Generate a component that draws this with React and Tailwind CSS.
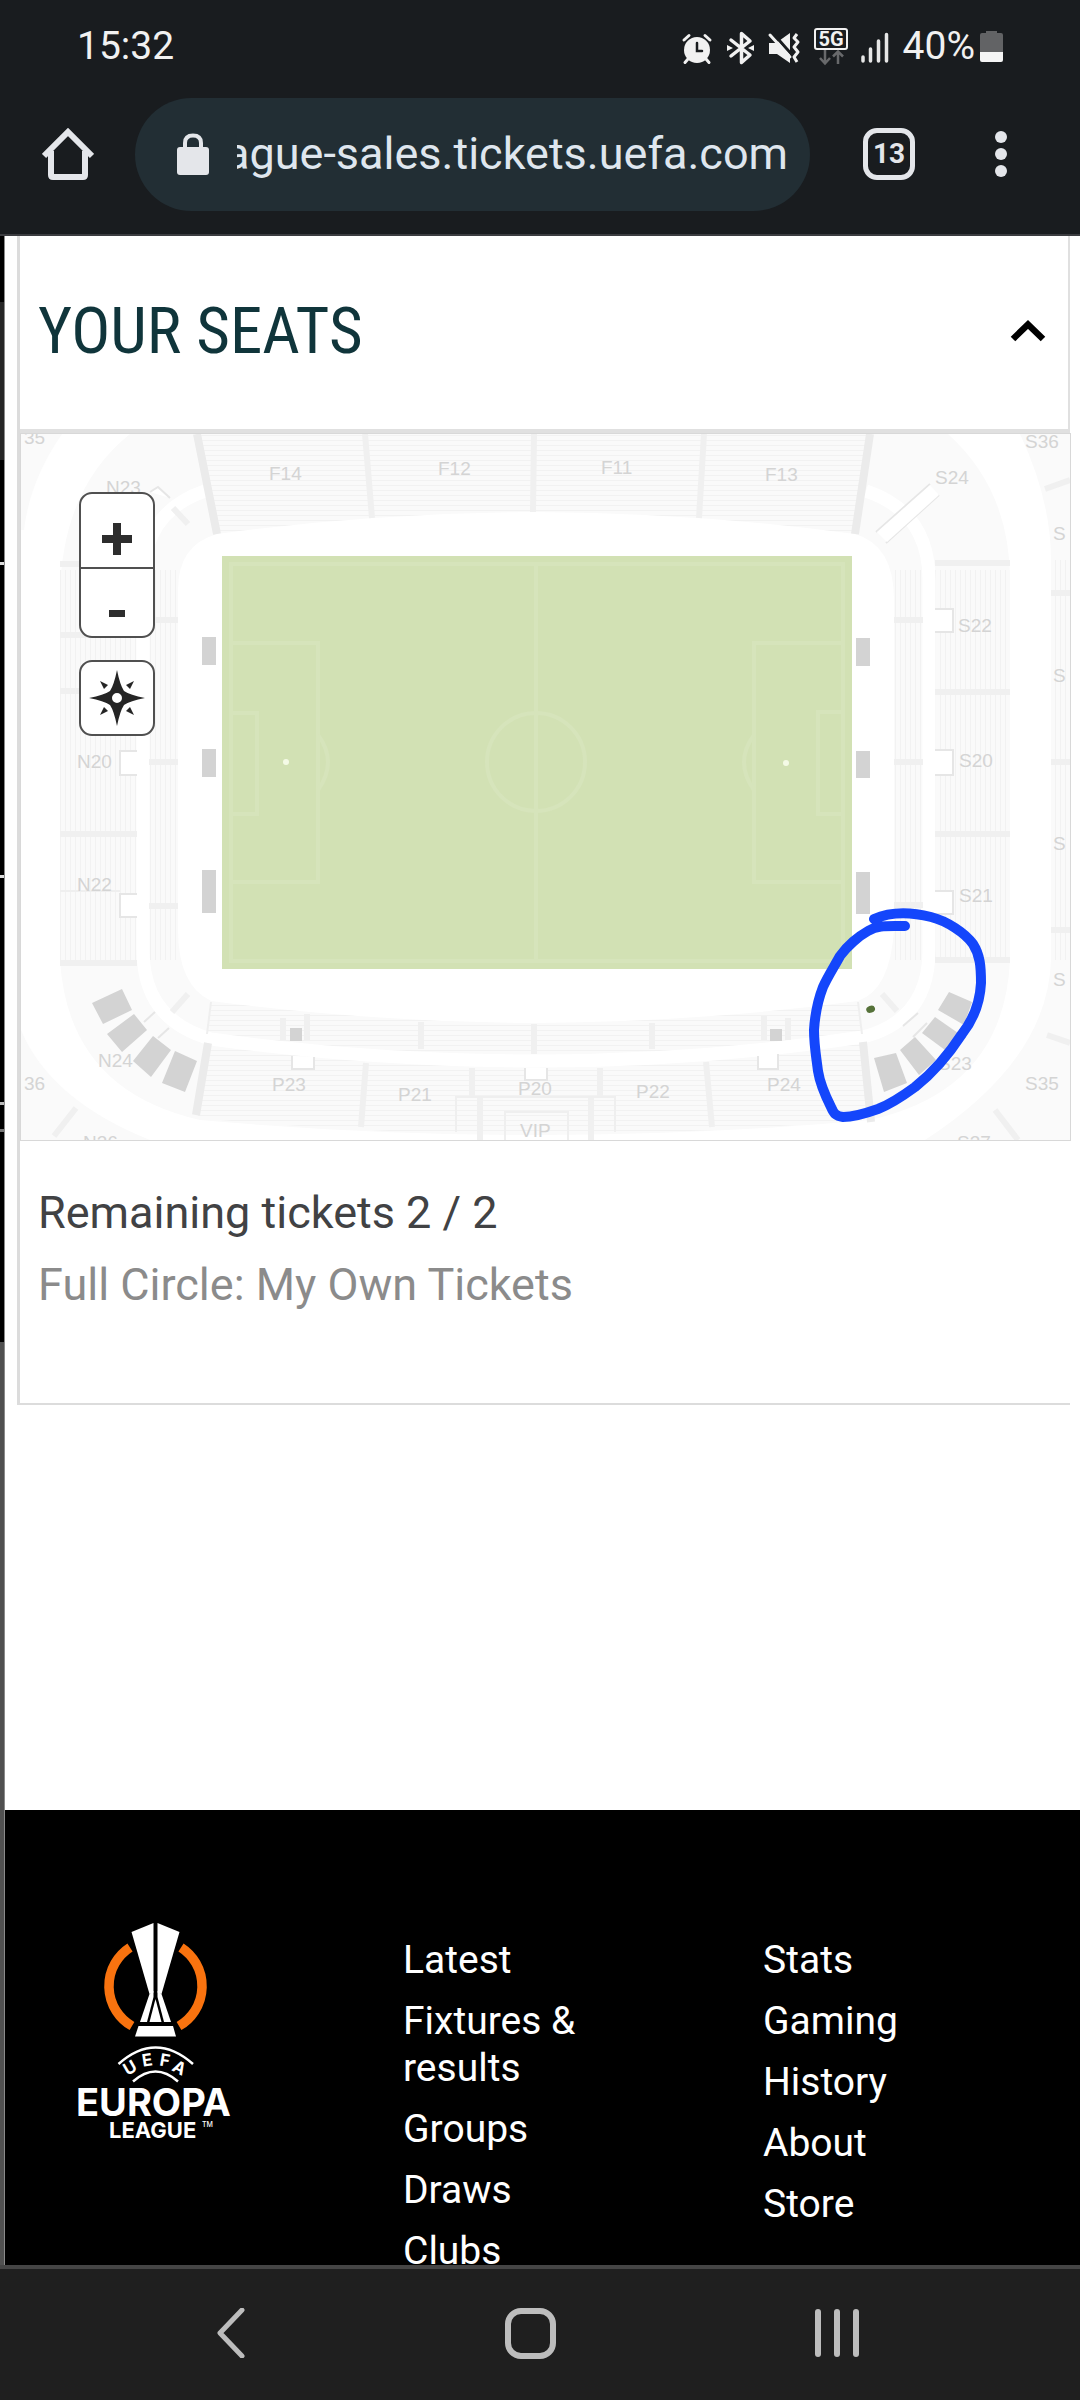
import React, { useState } from 'react';

const linksLeft = ['Latest', 'Fixtures & results', 'Groups', 'Draws', 'Clubs'];
const linksRight = ['Stats', 'Gaming', 'History', 'About', 'Store'];

const sectors = [
  ['35', 24, 444],
  ['N23', 106, 494],
  ['F14', 269, 480],
  ['F12', 438, 475],
  ['F11', 601, 474],
  ['F13', 765, 481],
  ['S24', 935, 484],
  ['S36', 1025, 448],
  ['S22', 958, 632],
  ['S20', 959, 767],
  ['S21', 959, 902],
  ['S23', 938, 1070],
  ['S35', 1025, 1090],
  ['S37', 957, 1149],
  ['N20', 77, 768],
  ['N22', 77, 891],
  ['N24', 98, 1067],
  ['N36', 83, 1149],
  ['36', 24, 1090],
  ['P23', 272, 1091],
  ['P21', 398, 1101],
  ['P20', 518, 1095],
  ['P22', 636, 1098],
  ['P24', 767, 1091],
  ['VIP', 520, 1137],
  ['S', 1053, 540],
  ['S', 1053, 682],
  ['S', 1053, 850],
  ['S', 1053, 986],
];

const StatusIcons = () => (
  <svg viewBox="680 24 212 42" className="w-[212px] h-[42px]" fill="none" aria-hidden="true">
    {/* alarm */}
    <g stroke="#f1f1f1" strokeWidth="3" strokeLinecap="round">
      <circle cx="697" cy="49" r="13" fill="#f1f1f1" stroke="none" />
      <path d="M684 39l5-4.500M710 39l-5-4.500M688 58l-3 3.500M706 58l3 3.500" />
      <path d="M697 42v8h5" stroke="#191c1f" strokeWidth="2.500" />
    </g>
    {/* bluetooth */}
    <path
      d="M731 39l19 15-8.500 7.500v-29l8.500 7.500-19 15"
      stroke="#f1f1f1"
      strokeWidth="3.500"
      strokeLinejoin="round"
      strokeLinecap="round"
    />
    <path d="M727 44l6 3-6 3zM754 44l-6 3 6 3z" fill="#f1f1f1" />
    {/* muted, vibrating */}
    <path d="M769 42h7l14-10v30l-13-9h-8z" fill="#f1f1f1" />
    <path d="M771 30l22 25" stroke="#191c1f" strokeWidth="3" />
    <path d="M770 34l20 22" stroke="#f1f1f1" strokeWidth="3" strokeLinecap="round" />
    <path
      d="M797 33l-3 4 4 4-4 5 4 5-4 5 3 5"
      stroke="#f1f1f1"
      strokeWidth="3"
      strokeLinejoin="round"
    />
    {/* 5G */}
    <rect x="815" y="28" width="32" height="20" rx="2" stroke="#f1f1f1" strokeWidth="2" />
    <text x="831" y="45" textAnchor="middle" fontSize="20" fontWeight="700" fill="#f1f1f1">
      5G
    </text>
    <path
      d="M825 49v13M820 57l5 5.500 5-5.500M838 63v-12M833 55.500l5-5 5 5"
      stroke="#68696b"
      strokeWidth="2.500"
    />
    {/* signal */}
    <path
      d="M863 56v4M870.500 48v12M878.500 40v20M886.500 33.500v26.500"
      stroke="#e6e6e6"
      strokeWidth="3.500"
      strokeLinecap="round"
    />
  </svg>
);

const Trophy = () => (
  <svg
    viewBox="76 1920 158 224"
    className="w-[158px] h-[224px] font-['Inter',sans-serif]"
    fill="none"
    role="img"
    aria-label="UEFA Europa League"
  >
    <path d="M129 1947.500A46 46 0 0 0 131 2026" stroke="#f9730f" strokeWidth="9.500" />
    <path d="M180 1947.500A46 46 0 0 1 178 2026" stroke="#f9730f" strokeWidth="9.500" />
    <g fill="#fff">
      <path d="M130.500 1932l22-9v69.500l-4 1.500z" />
      <path d="M178.500 1932l-22-9v69.500l4 1.500z" />
      <path d="M148.500 1994l4-3v6l-6.500 25h-7z" />
      <path d="M160.500 1994l-4-3v6l6.500 25h7z" />
      <path d="M154.500 1999l6 23h-12z" />
      <path d="M137.500 2026h34.500l3 10.500h-41z" />
    </g>
    <path d="M117.500 2064q37-33 74.500 0M132 2081.500q22.500-20 45 0" stroke="#fff" strokeWidth="2.500" />
    <g fill="#fff" fontWeight="700">
      <g fontSize="17" textAnchor="middle">
        <text transform="translate(132 2073) rotate(-30)">U</text>
        <text transform="translate(147 2066) rotate(-9)">E</text>
        <text transform="translate(163 2066) rotate(10)">F</text>
        <text transform="translate(175.500 2073) rotate(28)">A</text>
      </g>
      <text x="75" y="2116" fontSize="38">
        EUROPA
      </text>
      <text x="108" y="2138" fontSize="22">
        LEAGUE
      </text>
      <text x="201" y="2127" fontSize="7" fontWeight="500">
        TM
      </text>
    </g>
  </svg>
);

const StadiumMap = () => (
  <svg
    viewBox="21 434 1049 706"
    className="block w-full h-auto font-['Liberation_Sans',sans-serif]"
    fill="none"
    role="img"
    aria-label="Stadium map"
  >
    <defs>
      <pattern id="cols" width="5" height="5" patternUnits="userSpaceOnUse">
        <rect width="5" height="5" fill="#fafafa" />
        <rect width="1" height="5" fill="#f2f2f2" />
      </pattern>
      <pattern id="rows" width="5" height="5" patternUnits="userSpaceOnUse">
        <rect width="5" height="5" fill="#fafafa" />
        <rect width="5" height="1" fill="#f2f2f2" />
      </pattern>
    </defs>

    {/* upper and lower tiers */}
    <path
      d="M130 434Q60 490 60 600V960Q68 1090 200 1120Q540 1150 870 1120Q1004 1090 1010 960V580Q1010 490 948 434Z"
      fill="#fafafa"
    />
    <path d="M60 570H178V960H60zM894 570H1010V960H894z" fill="url(#cols)" />
    <path d="M195 434H870L855 536H217z" fill="url(#rows)" />
    <path d="M211 1000H858L868 1119Q540 1150 198 1118z" fill="url(#rows)" />
    <path
      d="M205 491Q143 512 143 580V950Q143 1020 211 1039Q370 1061 540 1061Q700 1061 863 1037Q929 1020 929 950V580Q929 512 866 491"
      stroke="#fff"
      strokeWidth="13"
    />
    <path
      d="M217 534Q373 513 536 512Q700 513 855 534Q894 545 894 600V930Q890 990 858 1001Q700 1022 536 1023Q370 1022 211 1001Q178 985 178 930V590Q178 545 217 534Z"
      fill="#fff"
    />

    {/* outer tier */}
    <g fill="#fafafa">
      <path d="M21 434H62Q30 480 24 530H21z" />
      <path d="M1020 434Q1051 500 1051 560V960Q1048 1060 925 1140H1070V434Z" />
      <path d="M21 1030Q50 1100 150 1140H21z" />
    </g>
    <path d="M1051 560H1070V960H1051z" fill="url(#cols)" />

    {/* sector dividers */}
    <g stroke="#f0f0f0" strokeWidth="6">
      <path d="M60 564H137M60 635H137M60 691H137M60 834H137M60 963H137" />
      <path d="M935 563H1010M935 692H1010M935 834H1010M935 960H1010" />
      <path d="M149 620H178M149 762H178M149 906H178M894 620H923M894 762H923M894 905H923" />
      <path d="M365 434L372 518M534 434L533 512M704 434L699 518" />
      <path d="M421 1022V1049M534 1024V1054M652 1023V1049M283 1018V1040M307 1014V1040M764 1016V1040M788 1018V1040" />
      <path d="M366 1063L361 1127M472 1068V1098M600 1068V1098M706 1062L712 1127" />
      <path d="M480 1097V1140M591 1097V1140M1051 593H1070M1051 762H1070M1051 930H1070" />
      <path d="M1045 489L1070 480M1047 1035L1070 1043M995 1110L1018 1140M76 1108L54 1136" />
      <path d="M173 508L188 524M172 1012L188 994M882 994L897 1011" />
    </g>
    <path
      d="M197 434L217 534M870 434L855 534M208 1043L196 1115M863 1042L871 1122"
      stroke="#ebebeb"
      strokeWidth="8"
    />
    <path
      d="M60 891H120M456 1132V1097H615V1132M211 1002L207 1034M858 1002L862 1034M505 1140V1112H568V1140"
      stroke="#efefef"
      strokeWidth="2"
    />

    {/* entrances */}
    <g fill="#fff" stroke="#e6e6e6" strokeWidth="2">
      <path d="M137 751H120V775H137M137 894H120V917H137" />
      <path d="M935 609H953V632H935M935 750H953V775H935M935 891H953V914H935" />
      <path d="M292 1056V1069H314V1057M525 1068V1080H547V1068M758 1056V1069H778V1054" />
      <path d="M876 532L930 484M886 543L939 495M144 1022L155 1012M158 1038L169 1028M903 1026L918 1013M913 1037L927 1023M150 492L158 487L170 498" />
      <path d="M877 532L930 485L939 495L887 542z" stroke="none" />
    </g>

    <g fill="#d3d3d3">
      <path d="M202 637h14v28h-14zM202 749h14v28h-14zM202 870h14v43h-14z" />
      <path d="M856 638h14v28h-14zM856 751h14v27h-14zM856 872h14v42h-14z" />
      <path d="M290 1028h12v13h-12zM770 1029h12v12h-12z" />
      <path d="M92 1003L122 989L132 1010L103 1024zM107 1034L134 1014L147 1030L122 1052zM133 1061L153 1036L171 1050L151 1077zM162 1083L175 1051L197 1061L185 1092z" />
      <path d="M949 992L972 1002L964 1025L938 1010zM935 1017L958 1033L945 1050L922 1033zM915 1037L936 1060L919 1075L900 1050zM874 1058L896 1053L907 1083L884 1092z" />
    </g>

    <g fontSize="19" fill="#d4d4d4">
      {sectors.map(([name, x, y]) => (
        <text key={name + x + y} x={x} y={y}>
          {name}
        </text>
      ))}
    </g>

    {/* pitch */}
    <rect x="222" y="556" width="630" height="413" fill="#d2e1b4" />
    <g stroke="#d6e4bb" strokeWidth="4">
      <path d="M231 564H843V961H231zM536 564V961" />
      <path d="M231 643H318V882H231M231 713H257V814H231" />
      <path d="M843 643H754V882H843M843 712H818V814H843" />
      <circle cx="536" cy="762" r="49" />
      <path d="M318 735Q338 762 318 790M754 735Q734 762 754 790" />
    </g>
    <circle cx="286" cy="762" r="3" fill="#f4fae6" />
    <circle cx="786" cy="763" r="3" fill="#f4fae6" />

    {/* selected seats and marker */}
    <ellipse cx="870.500" cy="1009.500" rx="4.500" ry="3.500" fill="#56723a" transform="rotate(-20 870 1009)" />
    <path
      d="M874 919C890 912 911 912 931 917C947 921 965 933 973 944C980 955 981 966 981 983C980 1003 973 1020 962 1034C949 1054 934 1072 915 1087C900 1098 891 1104 878 1109C864 1114 853 1117 843 1117C836 1116 834 1114 831 1107C826 1097 820 1084 818 1071C816 1055 814 1045 814 1030C815 1014 818 1000 823 987C828 976 834 967 840 956C847 946 859 936 868 931C878 925 886 926 905 926"
      stroke="#1446fb"
      strokeWidth="10"
      strokeLinecap="round"
      strokeLinejoin="round"
    />
  </svg>
);

const FooterLinks = ({ links }) => (
  <ul className="flex flex-col gap-[14px] w-[200px]">
    {links.map((link) => (
      <li key={link}>
        <a href="#" className="block">
          {link}
        </a>
      </li>
    ))}
  </ul>
);

const App = () => {
  const [open, setOpen] = useState(true);

  return (
    <div className="flex flex-col h-screen overflow-hidden bg-white font-['Roboto',sans-serif]">
      <header className="shrink-0 h-[236px] bg-[#191c1f] border-b-2 border-[#3b3c40] text-[#f1f1f1]">
        <div className="flex items-center h-[92px] pl-[77px] pr-[77px] text-[39px] leading-[47px]">
          <span className="mr-auto">15:32</span>
          <StatusIcons />
          <span className="ml-[11px]">40%</span>
          <svg viewBox="0 0 23 33" className="w-[23px] h-[33px] ml-[5px]" aria-hidden="true">
            <path d="M6 3V1h11v2h4q2 0 2 2v17H0V5q0-2 2-2z" fill="#626365" />
            <path d="M0 22h23v8q0 2-2 2H2q-2 0-2-2z" fill="#f5f5f5" />
          </svg>
        </div>

        <div className="flex items-center h-[124px] pl-[42px] pr-[73px] text-[#e4e6ea]">
          <button aria-label="Home">
            <svg viewBox="0 0 52 52" className="w-[52px] h-[52px]" fill="none" stroke="currentColor" strokeWidth="6">
              <path d="M2 28L26 4l24 24" />
              <path d="M9 23v24q0 2 2 2h30q2 0 2-2V23" />
            </svg>
          </button>
          <div className="flex flex-1 items-center min-w-0 h-[113px] ml-[41px] pl-[42px] pr-[20px] rounded-full bg-[#222e34]">
            <svg viewBox="0 0 32 42" className="shrink-0 w-8 h-[42px]" aria-hidden="true">
              <path d="M8 16V10q0-7.500 8-7.500t8 7.500v6" fill="none" stroke="currentColor" strokeWidth="4" />
              <rect y="14" width="32" height="28" rx="3" fill="currentColor" />
            </svg>
            <input
              type="text"
              aria-label="Address"
              defaultValue="ague-sales.tickets.uefa.com"
              className="flex-1 min-w-0 ml-[28px] -indent-[12px] text-[45px] leading-[52px] text-[#dfe6ee] focus:outline-none"
            />
          </div>
          <button className="w-[52px] h-[52px] ml-[53px] border-[5px] border-[#e4e6ea] rounded-[14px] text-[28px] leading-[42px] font-bold">
            13
          </button>
          <button aria-label="More" className="flex flex-col gap-[5px] ml-[80px]">
            <span className="w-3 h-3 rounded-full bg-[#e4e6ea]" />
            <span className="w-3 h-3 rounded-full bg-[#e4e6ea]" />
            <span className="w-3 h-3 rounded-full bg-[#e4e6ea]" />
          </button>
        </div>
      </header>

      <div className="flex flex-1 min-h-0">
        {/* edge of the page behind */}
        <div className="flex flex-col shrink-0 w-[5px] border-r border-[#8a8a8a] bg-black">
          <div className="h-[66px]" />
          <div className="h-[158px] bg-[#262626]" />
          <div className="h-[102px]" />
          <div className="h-[3px] bg-[#dddddd]" />
          <div className="h-[310px]" />
          <div className="h-[3px] bg-[#dddddd]" />
          <div className="h-[224px]" />
          <div className="h-[3px] bg-[#bbbbbb]" />
          <div className="h-[24px]" />
          <div className="h-[3px] bg-[#777777]" />
          <div className="h-[210px]" />
          <div className="flex-1 bg-[#505050]" />
        </div>

        <main className="flex flex-col flex-1 min-w-0 overflow-hidden">
          <section className="shrink-0 ml-[12px] mr-[10px] mb-[405px] border-l-[3px] border-b-2 border-[#dcdcdc]">
            <div className="flex items-center justify-between h-[197px] pl-[18px] pr-[22px] pb-[3px] border-b-4 border-r-2 border-[#e0e0e0]">
              <h2 className="text-[65px] leading-[72px] text-[#10353b] font-['Roboto_Condensed','Liberation_Sans_Narrow',sans-serif]">
                YOUR SEATS
              </h2>
              <button aria-label="Toggle seats" onClick={() => setOpen(!open)}>
                <svg viewBox="0 0 36 24" className="w-[36px] h-[24px]" fill="none" stroke="#000" strokeWidth="6.500">
                  <path d="M3 20L18 5.500 33 20" />
                </svg>
              </button>
            </div>
            {open && (
              <div className="relative -mr-px border border-[#d8d8d8]">
                <StadiumMap />
                <div className="absolute left-[58px] top-[58px] flex flex-col gap-[22px] w-[76px]">
                  <div className="flex flex-col h-[146px] border-2 border-[#505050] rounded-[13px] bg-white">
                    <button aria-label="Zoom in" className="flex h-[75px] items-center justify-center border-b-2 border-[#505050]">
                      <svg viewBox="0 0 30 32" className="w-[30px] h-8 mt-4" aria-hidden="true">
                        <path d="M11 0h8v12h11v8H19v12h-8V20H0v-8h11z" fill="#2d2d2d" />
                      </svg>
                    </button>
                    <button aria-label="Zoom out" className="flex flex-1 items-center justify-center">
                      <span className="w-4 h-[7px] mt-[22px] bg-[#2d2d2d]" />
                    </button>
                  </div>
                  <button
                    aria-label="Reset view"
                    className="flex items-center justify-center h-[76px] border-2 border-[#505050] rounded-[13px] bg-white"
                  >
                    <svg viewBox="-29 -29 58 58" className="w-[58px] h-[58px]" fill="#252525" aria-hidden="true">
                      <path
                        fillRule="evenodd"
                        d="M0-28Q3-13 7-7Q13-3 28 0Q13 3 7 7Q3 13 0 28Q-3 13-7 7Q-13 3-28 0Q-13-3-7-7Q-3-13 0-28ZM5 0A5 5 0 1 0-5 0A5 5 0 1 0 5 0Z"
                      />
                      <path d="M17-17l-4 8-4-4zM17 17l-8-4 4-4zM-17 17l4-8 4 4zM-17-17l8 4-4 4z" />
                    </svg>
                  </button>
                </div>
              </div>
            )}
            <div className="h-[262px] pt-[36px] pl-[18px] text-[45px] leading-[72px]">
              <p className="text-[#414244]">Remaining tickets 2 / 2</p>
              <p className="text-[#8b8b8b]">Full Circle: My Own Tickets</p>
            </div>
          </section>

          <footer className="flex flex-1 min-h-0 bg-black text-white text-[39px] leading-[47px]">
            <div className="w-[398px] shrink-0 pt-[110px] pl-[72px]">
              <Trophy />
            </div>
            <nav className="flex gap-[160px] pt-[127px]">
              <FooterLinks links={linksLeft} />
              <FooterLinks links={linksRight} />
            </nav>
          </footer>
        </main>
      </div>

      <nav className="flex shrink-0 items-center justify-between h-[135px] pl-[216px] pr-[221px] pb-[3px] bg-[#1f1f1f] border-t-4 border-[#454545]">
        <button aria-label="Back">
          <svg viewBox="0 0 30 50" className="w-[30px] h-[50px]" fill="none" stroke="#bdbdbd" strokeWidth="5">
            <path d="M26 2L4 25l22 23" strokeLinecap="round" strokeLinejoin="round" />
          </svg>
        </button>
        <button aria-label="Home screen" className="w-[51px] h-[51px] border-[6px] border-[#bdbdbd] rounded-[16px]" />
        <button aria-label="Recent apps" className="flex gap-[13px]">
          <span className="w-[6px] h-12 rounded-full bg-[#bdbdbd]" />
          <span className="w-[6px] h-12 rounded-full bg-[#bdbdbd]" />
          <span className="w-[6px] h-12 rounded-full bg-[#bdbdbd]" />
        </button>
      </nav>
    </div>
  );
};

export default App;
